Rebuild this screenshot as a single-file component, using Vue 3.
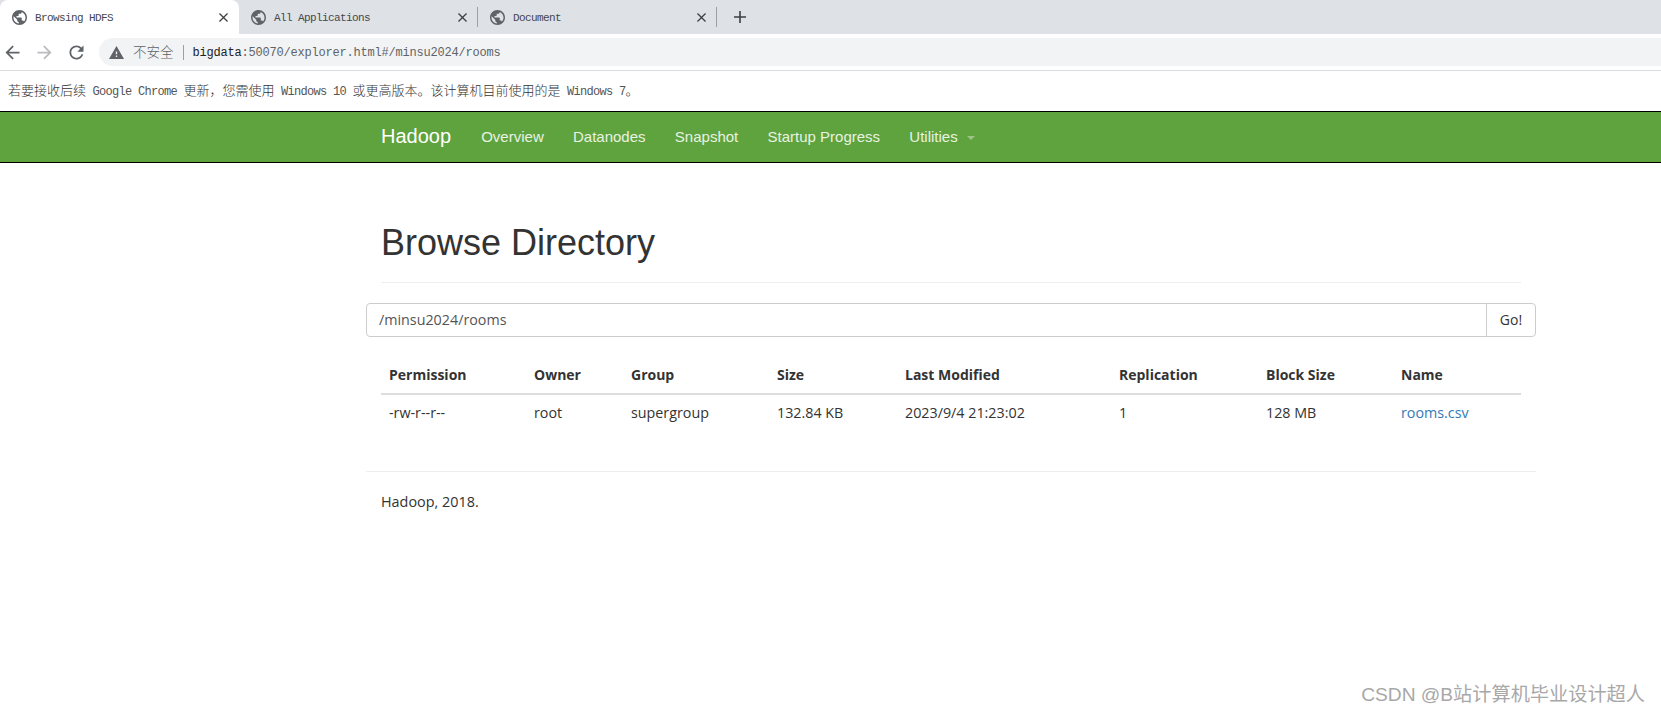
<script setup>
const tabs = [
  { title: 'Browsing HDFS', active: true },
  { title: 'All Applications', active: false },
  { title: 'Document', active: false }
]
const navItems = ['Overview', 'Datanodes', 'Snapshot', 'Startup Progress']
const columns = [
  { label: 'Permission', value: '-rw-r--r--', width: 145 },
  { label: 'Owner', value: 'root', width: 97 },
  { label: 'Group', value: 'supergroup', width: 146 },
  { label: 'Size', value: '132.84 KB', width: 128 },
  { label: 'Last Modified', value: '2023/9/4 21:23:02', width: 214 },
  { label: 'Replication', value: '1', width: 147 },
  { label: 'Block Size', value: '128 MB', width: 135 },
  { label: 'Name', value: 'rooms.csv', width: 128, link: true }
]
const infoParts = [
  { text: '若要接收后续', cjk: true },
  { text: ' Google Chrome ', cjk: false },
  { text: '更新，您需使用', cjk: true },
  { text: ' Windows 10 ', cjk: false },
  { text: '或更高版本。该计算机目前使用的是', cjk: true },
  { text: ' Windows 7', cjk: false },
  { text: '。', cjk: true }
]
</script>

<template>
  <div class="page">
    <div class="tabstrip">
      <div v-for="(tab, i) in tabs" :key="tab.title" class="tab" :class="{ active: tab.active }">
        <svg class="globe" viewBox="2 2 20 20" width="15" height="15">
          <path fill="#5f6368" d="M12 2C6.48 2 2 6.48 2 12s4.48 10 10 10 10-4.48 10-10S17.52 2 12 2zm-1 17.93c-3.95-.49-7-3.85-7-7.93 0-.62.08-1.21.21-1.79L9 15v1c0 1.1.9 2 2 2v1.93zm6.9-2.54c-.26-.81-1-1.39-1.9-1.39h-1v-3c0-.55-.45-1-1-1H8v-2h2c.55 0 1-.45 1-1V7h2c1.1 0 2-.9 2-2v-.41c2.93 1.19 5 4.06 5 7.41 0 2.08-.8 3.97-2.1 5.39z" />
        </svg>
        <span class="tab-title">{{ tab.title }}</span>
        <svg class="close" viewBox="5 5 14 14" width="9" height="9">
          <path fill="#3c4043" d="M19 6.41L17.59 5 12 10.59 6.41 5 5 6.41 10.59 12 5 17.59 6.41 19 12 13.41 17.59 19 19 17.59 13.41 12z" />
        </svg>
        <i v-if="i > 0" class="sep"></i>
      </div>
      <svg class="plus" viewBox="0 0 12 12" width="12" height="12">
        <path d="M6 0v12M0 6h12" stroke="#3c4043" stroke-width="1.600" fill="none" />
      </svg>
    </div>

    <div class="toolbar">
      <svg class="tool" viewBox="0 0 24 24" width="21" height="21">
        <path fill="#5f6368" d="M20 11H7.83l5.59-5.59L12 4l-8 8 8 8 1.41-1.41L7.83 13H20v-2z" />
      </svg>
      <svg class="tool" viewBox="0 0 24 24" width="21" height="21">
        <path fill="#b9bbbe" d="M12 4l-1.41 1.41L16.170 11H4v2h12.170l-5.580 5.590L12 20l8-8z" />
      </svg>
      <svg class="tool" viewBox="0 0 24 24" width="21" height="21">
        <path fill="#5f6368" d="M17.65 6.35C16.2 4.9 14.21 4 12 4c-4.42 0-7.99 3.58-7.99 8s3.57 8 7.99 8c3.73 0 6.84-2.55 7.73-6h-2.08c-.82 2.33-3.04 4-5.65 4-3.31 0-6-2.69-6-6s2.69-6 6-6c1.66 0 3.14.69 4.22 1.78L13 11h7V4l-2.35 2.35z" />
      </svg>
      <div class="omnibox">
        <svg class="warn" viewBox="1 2 22 19" width="15" height="13">
          <path fill="#5f6368" d="M1 21h22L12 2 1 21zm12-3h-2v-2h2v2zm0-4h-2v-4h2v4z" />
        </svg>
        <span class="insecure">不安全</span>
        <i class="divider"></i>
        <span class="url"><b>bigdata</b>:50070/explorer.html#/minsu2024/rooms</span>
      </div>
    </div>

    <div class="infobar"><span v-for="(part, i) in infoParts" :key="i" :class="part.cjk ? 'cjk' : 'latin'">{{ part.text }}</span></div>

    <nav class="navbar">
      <div class="container nav-inner">
        <a class="brand">Hadoop</a>
        <a v-for="item in navItems" :key="item" class="nav-link">{{ item }}</a>
        <a class="nav-link">Utilities<span class="caret"></span></a>
      </div>
    </nav>

    <main class="container">
      <div class="page-header">
        <h1>Browse Directory</h1>
      </div>

      <div class="input-group">
        <div class="path-input">/minsu2024/rooms</div>
        <div class="go">Go!</div>
      </div>

      <table class="files">
        <colgroup>
          <col v-for="c in columns" :key="c.label" :style="{ width: c.width + 'px' }" />
        </colgroup>
        <thead>
          <tr>
            <th v-for="c in columns" :key="c.label">{{ c.label }}</th>
          </tr>
        </thead>
        <tbody>
          <tr>
            <td v-for="c in columns" :key="c.label">
              <a v-if="c.link" class="file-link">{{ c.value }}</a>
              <template v-else>{{ c.value }}</template>
            </td>
          </tr>
        </tbody>
      </table>

      <div class="footer">
        <p>Hadoop, 2018.</p>
      </div>
    </main>

    <div class="watermark">CSDN @B站计算机毕业设计超人</div>
  </div>
</template>

<style>
html, body { margin: 0; background: #fff; overflow: hidden; }
</style>

<style scoped>
.page {
  position: relative;
  width: 1661px;
  height: 714px;
  overflow: hidden;
  background: #fff;
  color: #333;
  font-family: "Open Sans", "Noto Sans CJK SC", sans-serif;
  font-size: 14px;
}
.tabstrip {
  display: flex;
  align-items: stretch;
  height: 34px;
  background: #dee1e6;
}
.tab {
  position: relative;
  display: flex;
  align-items: center;
  box-sizing: border-box;
  width: 239px;
  padding: 0 11px 0 12px;
  font-family: "Liberation Mono", "Noto Sans CJK SC", monospace;
  font-size: 11px;
  letter-spacing: -.6px;
  color: #45474a;
}
.tab.active {
  background: #fff;
  border-radius: 8px 8px 0 0;
}
.globe { flex: none; margin-right: 8px; }
.tab-title { flex: 1; margin-top: 1px; white-space: nowrap; }
.close { flex: none; }
.sep {
  position: absolute;
  right: 0;
  top: 7px;
  width: 1px;
  height: 20px;
  background: #9aa0a6;
}
.plus { align-self: center; margin-left: 17px; }
.toolbar {
  display: flex;
  align-items: center;
  box-sizing: border-box;
  height: 37px;
  padding-left: 2px;
  background: #fff;
  border-bottom: 1px solid #dadce0;
}
.tool { flex: none; margin-right: 11px; }
.omnibox {
  flex: 1;
  display: flex;
  align-items: center;
  height: 28px;
  margin-left: 1px;
  padding-left: 10px;
  background: #f1f3f4;
  border-radius: 14px 0 0 14px;
}
.warn { flex: none; }
.insecure {
  margin: 0 0 3px 9px;
  font-family: "Noto Sans CJK SC", sans-serif;
  font-size: 13.500px;
  font-weight: 300;
  color: #5f6368;
}
.divider {
  width: 1px;
  height: 15px;
  margin: 0 9px;
  background: #9aa0a6;
}
.url {
  margin-top: 1px;
  font-family: "Liberation Mono", monospace;
  font-size: 12px;
  letter-spacing: -.2px;
  color: #5f6368;
}
.url b { font-weight: 400; color: #202124; }
.infobar {
  box-sizing: border-box;
  height: 40px;
  padding: 0 8px;
  line-height: 38px;
  color: #333;
  white-space: pre;
}
.cjk {
  font-family: "Noto Sans CJK SC", sans-serif;
  font-size: 13px;
  font-weight: 300;
}
.latin {
  font-family: "Liberation Mono", monospace;
  font-size: 12px;
  letter-spacing: -.7px;
  color: #555;
}
.navbar {
  box-sizing: border-box;
  height: 52px;
  background: #5fa33e;
  border-top: 1px solid #000;
  border-bottom: 1px solid #000;
}
.container {
  box-sizing: border-box;
  width: 1170px;
  margin-left: 366px;
  padding: 0 15px;
}
.nav-inner {
  display: flex;
  align-items: center;
  height: 50px;
  padding-bottom: 1px;
  font-family: "Liberation Sans", Arial, sans-serif;
  color: #e8f2e2;
}
.brand {
  margin-right: 15.500px;
  font-size: 20px;
  color: #fff;
}
.nav-link {
  padding: 0 14.650px;
  font-size: 15px;
}
.caret {
  display: inline-block;
  margin-left: 9px;
  vertical-align: middle;
  border-top: 4px solid #9cc487;
  border-left: 4px solid transparent;
  border-right: 4px solid transparent;
}
.page-header {
  box-sizing: border-box;
  height: 120px;
  padding-top: 60px;
  border-bottom: 1px solid #eee;
}
h1 {
  margin: 0;
  font-family: "Liberation Sans", Arial, sans-serif;
  font-size: 36px;
  font-weight: 500;
  line-height: 40px;
  color: #333;
}
.input-group {
  display: flex;
  height: 34px;
  margin: 20px -15px 0;
  border: 1px solid #ccc;
  border-radius: 4px;
  box-sizing: border-box;
}
.path-input {
  flex: 1;
  padding-left: 12px;
  font-size: 14.300px;
  line-height: 31px;
  color: #555;
}
.go {
  width: 48px;
  border-left: 1px solid #ccc;
  line-height: 31px;
  text-align: center;
}
.files {
  width: 1140px;
  margin-top: 20px;
  border-collapse: collapse;
  table-layout: fixed;
}
th, td {
  box-sizing: border-box;
  padding: 8px;
  text-align: left;
  line-height: 20px;
  white-space: nowrap;
}
th {
  height: 37px;
  font-weight: 700;
  border-bottom: 2px solid #ddd;
}
td { font-size: 14.300px; }
.file-link { color: #337ab7; }
.footer {
  margin: 40px -15px 0;
  padding: 20px 15px 0;
  border-top: 1px solid #eee;
}
.footer p { margin: 0; font-size: 14.400px; line-height: 20px; }
.watermark {
  position: absolute;
  right: 16px;
  top: 682px;
  font-family: "Liberation Sans", "Noto Sans CJK SC", sans-serif;
  font-size: 19.200px;
  line-height: 26px;
  color: #a8a8a8;
  white-space: nowrap;
}
</style>
